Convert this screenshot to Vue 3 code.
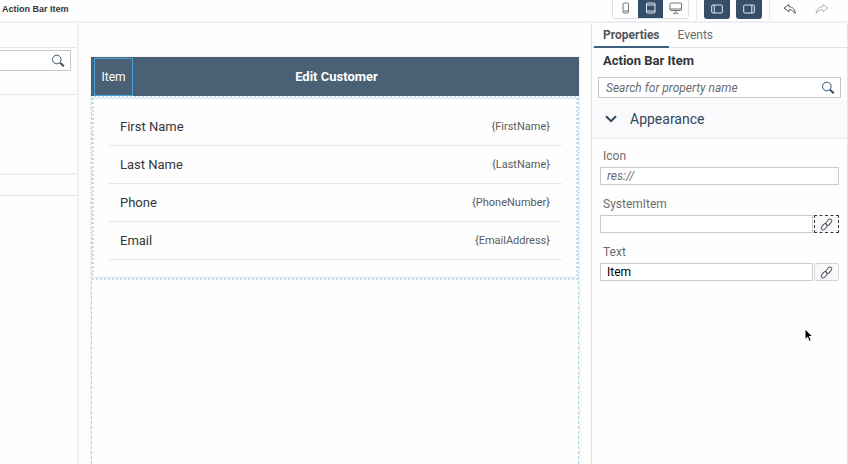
<script setup>
import { ref } from 'vue'

const rows = [
  { label: 'First Name', value: '{FirstName}' },
  { label: 'Last Name', value: '{LastName}' },
  { label: 'Phone', value: '{PhoneNumber}' },
  { label: 'Email', value: '{EmailAddress}' },
]
const fields = ref([
  { id: 'icon', label: 'Icon', value: '', placeholder: 'res://', link: false, focused: false },
  { id: 'system-item', label: 'SystemItem', value: '', placeholder: '', link: true, focused: true },
  { id: 'text', label: 'Text', value: 'Item', placeholder: '', link: true, focused: false },
])
const outlineQuery = ref('')
const propertyQuery = ref('')
</script>

<template>
  <div class="app">
    <header class="toolbar">
      <strong class="crumb">Action Bar Item</strong>
      <div class="devices">
        <button type="button" aria-label="Phone">
          <svg width="8" height="12" viewBox="0 0 8 12"><rect x="1" y="1" width="5.500" height="10" rx="1" /><path d="M1.500 9h4.500" /></svg>
        </button>
        <button type="button" class="on" aria-label="Tablet">
          <svg width="12" height="12" viewBox="0 0 12 12"><rect x="1.500" y="1" width="8.500" height="10" rx="1" /><path d="M2 3h8M2 9h8" /></svg>
        </button>
        <button type="button" aria-label="Desktop">
          <svg width="14" height="12" viewBox="0 0 14 12"><rect x="1" y="1" width="11.500" height="7.500" rx="1" /><path d="M1 7h11.500M6.800 9v2M4 11.300h5.500" /></svg>
        </button>
      </div>
      <i class="divider"></i>
      <div class="toggles">
        <button type="button" class="on" aria-label="Left panel">
          <svg width="12" height="10" viewBox="0 0 12 10"><rect x=".7" y="1" width="10.600" height="8" rx="1" /><path d="M3.200 1v8" /></svg>
        </button>
        <button type="button" class="on" aria-label="Right panel">
          <svg width="12" height="10" viewBox="0 0 12 10"><rect x=".7" y="1" width="10.600" height="8" rx="1" /><path d="M8.800 1v8" /></svg>
        </button>
      </div>
      <i class="divider"></i>
      <div class="history">
        <button type="button" aria-label="Undo">
          <svg width="14" height="12" viewBox="0 0 14 12"><path d="M6 1.500 1 5l5 3.800V6.700c2.500-.2 4 .9 6.200 3.800 0-3.500-2.200-6.700-6.200-6.800z" /></svg>
        </button>
        <button type="button" class="faded" aria-label="Redo">
          <svg width="14" height="12" viewBox="0 0 14 12"><path d="M8 1.500 13 5 8 8.800V6.700C5 6.500 3 7.500 1.200 10.500 1.200 6.500 3.800 3.800 8 3.700z" /></svg>
        </button>
      </div>
    </header>

    <div class="body">
      <aside class="outline">
        <div class="outline-head"></div>
        <div class="outline-search">
          <div class="search">
            <input v-model="outlineQuery" type="search" aria-label="Search outline" />
            <svg class="lens" width="14" height="14" viewBox="0 0 14 14"><circle cx="5.800" cy="5.500" r="4.300" /><path class="handle" d="m9 8.700 3.800 3.600" /></svg>
          </div>
        </div>
        <div class="outline-tree"></div>
        <div class="outline-foot"></div>
      </aside>

      <main class="canvas">
        <section class="device">
          <div class="action-bar">
            <button type="button" class="bar-item">Item</button>
            <h1>Edit Customer</h1>
          </div>
          <div class="form">
            <dl>
              <div v-for="row in rows" :key="row.label" class="row">
                <dt>{{ row.label }}</dt>
                <dd>{{ row.value }}</dd>
              </div>
            </dl>
          </div>
        </section>
      </main>

      <aside class="props">
        <nav class="tabs">
          <button type="button" class="tab active">Properties</button>
          <button type="button" class="tab">Events</button>
        </nav>
        <h2>Action Bar Item</h2>
        <div class="search prop-search">
          <input v-model="propertyQuery" type="search" placeholder="Search for property name" aria-label="Search for property name" />
          <svg class="lens" width="14" height="14" viewBox="0 0 14 14"><circle cx="5.800" cy="5.500" r="4.300" /><path class="handle" d="m9 8.700 3.800 3.600" /></svg>
        </div>
        <button type="button" class="section">
          <svg width="12" height="8" viewBox="0 0 12 8"><path d="m1 1.200 5 5 5-5" /></svg>
          <span>Appearance</span>
        </button>
        <div class="fields">
          <div v-for="field in fields" :key="field.id" class="field">
            <label :for="field.id">{{ field.label }}</label>
            <div class="control">
              <input :id="field.id" v-model="field.value" type="text" :placeholder="field.placeholder" />
              <button v-if="field.link" type="button" class="link" :class="{ focused: field.focused }" :aria-label="'Bind ' + field.label">
                <svg width="13" height="13" viewBox="0 0 13 13">
                  <rect x="5.300" y="2.300" width="7" height="3.800" rx="1.900" transform="rotate(-52 8.800 4.200)" />
                  <rect x=".7" y="6.900" width="7" height="3.800" rx="1.900" transform="rotate(-52 4.200 8.800)" />
                </svg>
              </button>
            </div>
          </div>
        </div>
      </aside>
    </div>

    <svg class="pointer" width="10" height="15" viewBox="0 0 10 15"><path d="M1 1v10.500l2.500-2.300 1.700 4.200 2-.8-1.700-4.100h3.300z" /></svg>
  </div>
</template>

<style>
body {
  margin: 0;
  background: #fefefe;
}
</style>

<style scoped>
* {
  box-sizing: border-box;
}
.app {
  display: flex;
  flex-direction: column;
  min-height: 100vh;
  font-family: Roboto, "Liberation Sans", sans-serif;
  font-size: 12px;
  color: #32363a;
}
button,
input {
  font: inherit;
  margin: 0;
}
button {
  display: flex;
  align-items: center;
  justify-content: center;
  padding: 0;
  border: 0;
  background: none;
  color: inherit;
}
svg {
  flex: none;
  fill: none;
  stroke: currentColor;
}
.toolbar {
  display: flex;
  align-items: flex-end;
  height: 23px;
  padding: 0 13px 2px 2px;
  border-bottom: 2px solid #eeeff3;
  overflow: hidden;
}
.crumb {
  margin-right: auto;
  font: bold 9px/14px "Liberation Sans", sans-serif;
  padding-bottom: 3px;
}
.devices {
  display: flex;
  border: 1px solid #dcdfe4;
  border-radius: 3px;
}
.devices button {
  width: 25px;
  height: 20px;
  color: #6f747b;
}
.toggles {
  display: flex;
  gap: 6px;
}
.toggles button {
  width: 26px;
  height: 21px;
  border-radius: 3px;
}
.devices .on,
.toggles .on {
  background: #354f6b;
  color: #e4e9ef;
}
.divider {
  width: 1px;
  height: 20px;
  margin: 0 7px;
  background: #e4e6ea;
}
.history {
  display: flex;
  gap: 6px;
}
.history button {
  width: 26px;
  height: 21px;
  color: #555b63;
}
.history .faded {
  color: #b3b7bc;
}
.body {
  display: flex;
  flex: 1;
}
.outline {
  width: 79px;
  border-right: 2px solid #eeeff3;
}
.outline-head {
  height: 25px;
  border-bottom: 1px solid #e6e8ec;
}
.outline-search {
  height: 47px;
  padding: 2px 6px 0 0;
  border-bottom: 1px solid #e6e8ec;
}
.outline-search .search {
  border-left: 0;
}
.outline-tree {
  height: 80px;
  border-bottom: 2px solid #eeeff3;
}
.outline-foot {
  height: 21px;
  border-bottom: 1px solid #dde0e5;
}
.search {
  display: flex;
  align-items: center;
  height: 21px;
  padding: 0 5px 0 7px;
  border: 1px solid #c4c6c9;
  background: #fff;
}
.search input {
  flex: 1;
  min-width: 0;
  padding: 0;
  border: 0;
  outline: 0;
  background: none;
  appearance: none;
}
input::placeholder {
  color: #6a6d70;
  font-style: italic;
  opacity: 1;
}
.lens {
  color: #34506e;
}
.handle {
  stroke-width: 2;
}
.canvas {
  display: flex;
  flex: 1;
  min-width: 0;
  padding: 34px 12px 0;
}
.device {
  flex: 1;
  border: 1px dashed #b4d3e3;
  border-top: 0;
  border-bottom: 0;
  box-shadow: 0 0 3px #e2e4e8;
}
.action-bar {
  display: grid;
  grid-template-columns: 1fr auto 1fr;
  align-items: center;
  height: 39px;
  margin: 0 -1px;
  padding-left: 3px;
  background: #4a6075;
  color: #fff;
}
.bar-item {
  justify-self: start;
  width: 39px;
  height: 38px;
  border: 1px solid #4aa3d8;
}
h1 {
  margin: 0;
  font-size: 13px;
  line-height: 16px;
  font-weight: bold;
}
.form {
  padding: 9px 14px 18px;
  border: 2px solid transparent;
  border-top-width: 3px;
  background:
    linear-gradient(#fefefe, #fefefe) padding-box,
    repeating-conic-gradient(#c6dfeb 0 25%, #fefefe 0 50%) 0 0 / 4px 4px border-box;
  box-shadow: inset 0 -1px 0 #dedfe1;
}
dl {
  margin: 0;
}
.row {
  display: flex;
  align-items: center;
  justify-content: space-between;
  min-height: 38px;
  padding: 0 12px;
  border-bottom: 1px solid #e8e9eb;
}
dt {
  font-size: 13px;
}
dd {
  margin: 0;
  font-size: 11px;
  color: #595c60;
}
.props {
  width: 257px;
  border: 1px solid #dfe2e7;
  border-width: 0 1px;
}
.tabs {
  display: flex;
  height: 25px;
  padding-left: 2px;
  border-bottom: 1px solid #dfe2e7;
}
.tab {
  height: 25px;
  padding: 0 9px;
  border-bottom: 2px solid transparent;
  color: #6a6d70;
}
.tab.active {
  border-color: #3f5f80;
  color: #51555a;
  font-weight: bold;
}
h2 {
  margin: 0;
  padding: 4px 11px 7px;
  font-size: 13px;
  line-height: 18px;
}
.prop-search {
  margin: 0 6px 2px;
}
.section {
  justify-content: flex-start;
  gap: 13px;
  width: 100%;
  height: 39px;
  padding: 0 13px;
  border-bottom: 1px solid #e6e8ec;
  background: #fafafc;
  font-size: 14px;
  color: #34475b;
}
.section svg {
  stroke-width: 2;
}
.fields {
  display: grid;
  gap: 11px;
  padding: 9px 8px;
}
.field label {
  display: block;
  padding: 0 3px 3px;
  line-height: 16px;
  color: #6a6d70;
}
.control {
  display: flex;
  gap: 1px;
}
.control input {
  flex: 1;
  min-width: 0;
  height: 18px;
  padding: 0 6px;
  border: 1px solid #c9cbd0;
  background: #fff;
  color: #000;
}
.link {
  width: 25px;
  height: 18px;
  border: 1px solid #d5d7dc;
  border-radius: 2px;
  background: #f9f9fb;
  color: #54585d;
}
.link.focused {
  border: 1px dashed #33373b;
  border-radius: 0;
}
.pointer {
  position: absolute;
  left: 804px;
  top: 328px;
  fill: #000;
  stroke: #fff;
}
</style>
